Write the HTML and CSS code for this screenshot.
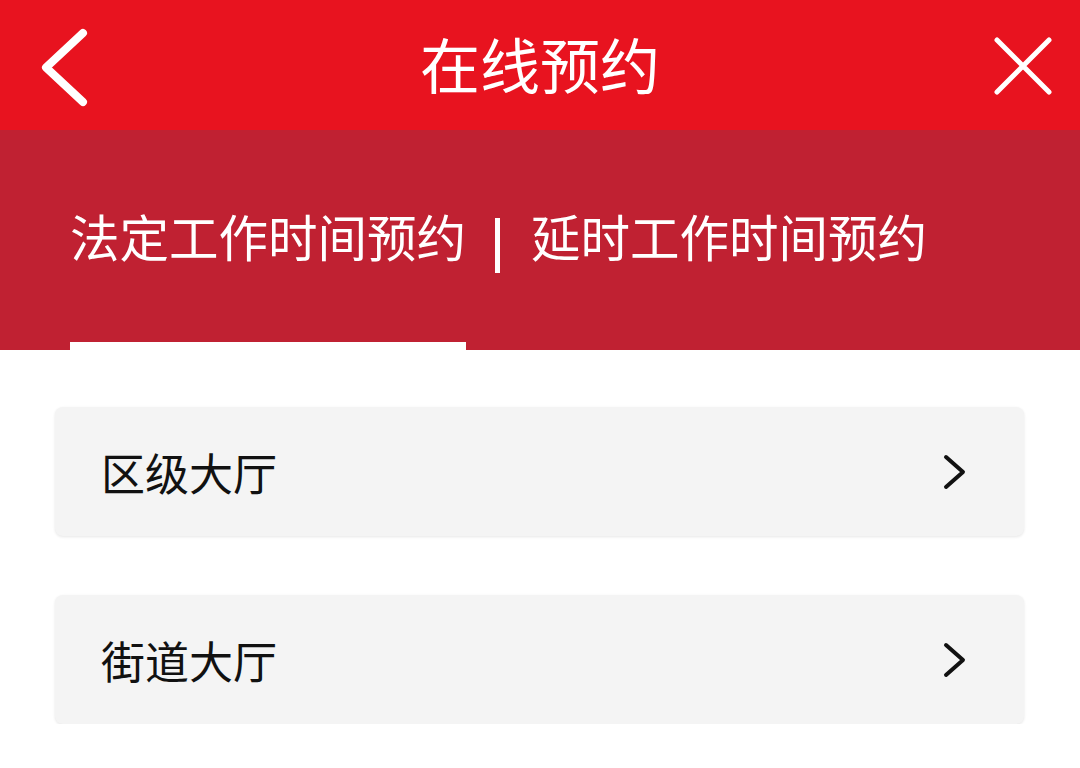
FILE: index.html
```html
<!DOCTYPE html>
<html lang="zh-CN">
<head>
<meta charset="utf-8">
<title>在线预约</title>
<link rel="stylesheet" href="styles.css">
</head>
<body>
<header class="topbar">
  <div class="side">
    <svg class="icon" width="130" height="130" viewBox="0 0 130 130">
      <polyline points="83,33 46,67.5 83,102" fill="none" stroke="#fff" stroke-width="8" stroke-linecap="round" stroke-linejoin="round"/>
    </svg>
  </div>
  <h1 class="title">在线预约</h1>
  <div class="side">
    <svg class="icon" width="130" height="130" viewBox="0 0 130 130">
      <path d="M47 40 L99 92 M99 40 L47 92" fill="none" stroke="#fff" stroke-width="5" stroke-linecap="round"/>
    </svg>
  </div>
</header>
<nav class="tabs">
  <div class="tab active">法定工作时间预约</div>
  <span class="sep"></span>
  <div class="tab">延时工作时间预约</div>
</nav>
<main class="list">
  <div class="card">
    <span class="card-text">区级大厅</span>
    <svg class="chev" width="24" height="36" viewBox="0 0 24 36">
      <polyline points="4,3 21,18 4,33" fill="none" stroke="#111" stroke-width="4" stroke-linecap="round" stroke-linejoin="round"/>
    </svg>
  </div>
  <div class="card">
    <span class="card-text">街道大厅</span>
    <svg class="chev" width="24" height="36" viewBox="0 0 24 36">
      <polyline points="4,3 21,18 4,33" fill="none" stroke="#111" stroke-width="4" stroke-linecap="round" stroke-linejoin="round"/>
    </svg>
  </div>
</main>
</body>
</html>
```

FILE: styles.css
```css
html, body {
  margin: 0;
  padding: 0;
  background: #ffffff;
  font-family: "Noto Sans CJK SC", "Noto Sans", sans-serif;
}

.topbar {
  display: grid;
  grid-template-columns: 130px 1fr 130px;
  height: 130px;
  background: #e8131f;
  align-items: center;
}

.side {
  height: 130px;
}

.icon {
  display: block;
}

.title {
  margin: 0;
  text-align: center;
  color: #ffffff;
  font-size: 60px;
  font-weight: 400;
  line-height: 70px;
  padding-bottom: 4px;
}

.tabs {
  display: flex;
  height: 220px;
  background: #c02132;
  padding-left: 70px;
  box-sizing: border-box;
}

.tab {
  box-sizing: border-box;
  height: 220px;
  padding-top: 76px;
  font-size: 49.5px;
  line-height: 60px;
  color: #ffffff;
  white-space: nowrap;
  border-bottom: 8px solid transparent;
}

.tab.active {
  border-bottom-color: #ffffff;
}

.sep {
  width: 5px;
  height: 55px;
  margin: 88px 31px 0 29px;
  background: #ffffff;
}

.list {
  padding: 57px 56px 0 55px;
  display: flex;
  flex-direction: column;
  gap: 59px;
}

.card {
  display: flex;
  align-items: center;
  justify-content: space-between;
  height: 129px;
  box-sizing: border-box;
  padding: 0 58px 0 46px;
  background: #f4f4f4;
  border-radius: 8px;
  box-shadow: 0 1px 3px rgba(0, 0, 0, 0.10);
}

.card-text {
  font-size: 44px;
  line-height: 60px;
  color: #111111;
}

.chev {
  display: block;
}
```
